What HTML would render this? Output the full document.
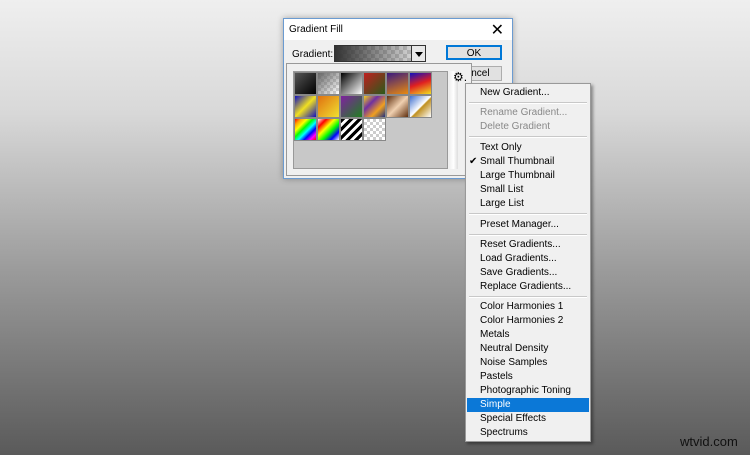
<!DOCTYPE html>
<html><head><style>
*{margin:0;padding:0;box-sizing:border-box}
body{width:750px;height:455px;overflow:hidden;position:relative;background:linear-gradient(#efefef 0%,#d8d8d8 25%,#9a9a9a 60%,#5a5a5a 100%);font-family:"Liberation Sans","DejaVu Sans",sans-serif;font-size:11px;color:#000}
.dlg{position:absolute;left:283px;top:18px;width:230px;height:161px;background:#f0f0f0;border:1px solid #6b9bd1;box-shadow:0 0 6px rgba(0,0,0,.3);font-size:10px}
.title{height:21px;background:#fff;padding:5px 0 0 5px;font-size:10px}
.x{position:absolute;right:8px;top:1px;font-size:16px}
.lbl{position:absolute;left:8px;top:30px}
.gsw{position:absolute;left:50px;top:26px;width:92px;height:17px;border:1px solid #333;background:linear-gradient(90deg,#333,rgba(200,200,200,.3)),repeating-conic-gradient(#ccc 0 25%,#fff 0 50%) 0 0/8px 8px}
.dd{position:absolute;left:127px;top:27px;width:14px;height:15px;background:#e8e8e8;border-left:1px solid #333}
.dd:after{content:"";position:absolute;left:3px;top:6px;border:4px solid transparent;border-top:5px solid #000}
.btn{position:absolute;left:162px;width:56px;height:15px;border:1px solid #adadad;background:#e1e1e1;text-align:center;line-height:13px}
.pop{position:absolute;left:286px;top:63px;width:186px;height:113px;background:#f0f0f0;border:1px solid #999}
.grid{position:absolute;left:6px;top:7px;width:155px;height:98px;background:#c8c8c8;border:1px solid #999}
.sb{position:absolute;left:162px;top:7px;width:9px;height:98px;background:linear-gradient(90deg,#eee,#fff,#ddd)}
.t{position:absolute;width:23px;height:23px;border:1px solid #888}
.gear{position:absolute;left:166px;top:6px;font-size:12px}
.menu{position:absolute;left:465px;top:83px;width:126px;height:359px;background:#f0f0f0;border:1px solid #999;box-shadow:2px 2px 3px rgba(0,0,0,.4)}
.it{position:absolute;left:1px;width:122px;height:14px;line-height:14px;padding-left:13px;font-size:10px}
.dis{color:#888}
.hl{background:#0b78d7;color:#fff}
.sep{position:absolute;left:3px;width:118px;border-top:1px solid #c8c8c8;border-bottom:1px solid #fff}
.wm{position:absolute;left:680px;top:434px;font-size:13px;color:#111}
</style></head><body>
<div class="dlg">
<div class="title">Gradient Fill</div><div class="x">✕</div>
<div class="lbl">Gradient:</div>
<div class="gsw"></div><div class="dd"></div>
<div class="btn" style="top:26px;border-color:#0078d7;border-width:2px">OK</div>
<div class="btn" style="top:47px">Cancel</div>
</div>
<div class="pop">
<div class="grid">
<div class="t" style="left:0;top:0;background:linear-gradient(135deg,#555,#000)"></div>
<div class="t" style="left:23px;top:0;background:linear-gradient(135deg,#666,rgba(255,255,255,.2)),repeating-conic-gradient(#ccc 0 25%,#fff 0 50%) 0 0/6px 6px"></div>
<div class="t" style="left:46px;top:0;background:linear-gradient(135deg,#000,#fff)"></div>
<div class="t" style="left:69px;top:0;background:linear-gradient(135deg,#c02020,#2a5a1a)"></div>
<div class="t" style="left:92px;top:0;background:linear-gradient(160deg,#3a1a80,#e88a10)"></div>
<div class="t" style="left:115px;top:0;background:linear-gradient(160deg,#1010c0,#e02020,#f0e020)"></div>
<div class="t" style="left:0;top:23px;background:linear-gradient(135deg,#1010c0,#f0e020,#1010c0)"></div>
<div class="t" style="left:23px;top:23px;background:linear-gradient(135deg,#e07010,#f0e030)"></div>
<div class="t" style="left:46px;top:23px;background:linear-gradient(135deg,#8020a0,#208020)"></div>
<div class="t" style="left:69px;top:23px;background:linear-gradient(135deg,#f0d020,#7030a0,#f0a020,#203080)"></div>
<div class="t" style="left:92px;top:23px;background:linear-gradient(135deg,#603010,#f0d0b0,#603010)"></div>
<div class="t" style="left:115px;top:23px;background:linear-gradient(135deg,#4070d0,#fff 50%,#c09020 55%,#fff)"></div>
<div class="t" style="left:0;top:46px;background:linear-gradient(135deg,red,orange,yellow,lime,cyan,blue,magenta,red)"></div>
<div class="t" style="left:23px;top:46px;background:linear-gradient(135deg,#fff,red,yellow,lime,blue,#fff)"></div>
<div class="t" style="left:46px;top:46px;background:repeating-linear-gradient(135deg,#000 0 3px,#fff 3px 6px)"></div>
<div class="t" style="left:69px;top:46px;background:repeating-conic-gradient(#ccc 0 25%,#fff 0 50%) 0 0/6px 6px"></div>
</div>
<div class="sb"></div>
<div class="gear">⚙.</div>
</div>
<div class="menu">
<div class="it" style="top:2px">New Gradient...</div>
<div class="sep" style="top:18px"></div>
<div class="it dis" style="top:22px">Rename Gradient...</div>
<div class="it dis" style="top:36px">Delete Gradient</div>
<div class="sep" style="top:52px"></div>
<div class="it" style="top:57px">Text Only</div>
<div class="it" style="top:71px"><span style="position:absolute;left:2px">✔</span>Small Thumbnail</div>
<div class="it" style="top:85px">Large Thumbnail</div>
<div class="it" style="top:99px">Small List</div>
<div class="it" style="top:113px">Large List</div>
<div class="sep" style="top:129px"></div>
<div class="it" style="top:134px">Preset Manager...</div>
<div class="sep" style="top:150px"></div>
<div class="it" style="top:154px">Reset Gradients...</div>
<div class="it" style="top:168px">Load Gradients...</div>
<div class="it" style="top:182px">Save Gradients...</div>
<div class="it" style="top:196px">Replace Gradients...</div>
<div class="sep" style="top:212px"></div>
<div class="it" style="top:216px">Color Harmonies 1</div>
<div class="it" style="top:230px">Color Harmonies 2</div>
<div class="it" style="top:244px">Metals</div>
<div class="it" style="top:258px">Neutral Density</div>
<div class="it" style="top:272px">Noise Samples</div>
<div class="it" style="top:286px">Pastels</div>
<div class="it" style="top:300px">Photographic Toning</div>
<div class="it hl" style="top:314px">Simple</div>
<div class="it" style="top:328px">Special Effects</div>
<div class="it" style="top:342px">Spectrums</div>
</div>
<div class="wm">wtvid.com</div>
</body></html>
